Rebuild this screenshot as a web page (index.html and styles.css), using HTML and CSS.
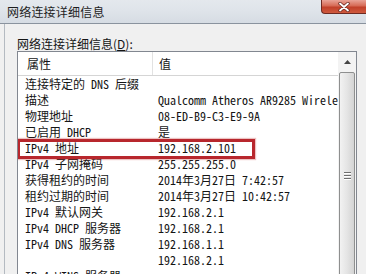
FILE: index.html
```html
<!DOCTYPE html>
<html lang="zh-CN">
<head>
<meta charset="utf-8">
<link rel="stylesheet" href="styles.css">
</head>
<body>
<div class="window">
  <div class="titlebar">
    <span class="title">网络连接详细信息</span>
    <div class="close">
      <svg width="14" height="10" viewBox="0 0 14 10"><path d="M3 1.5 L11 8.5 M11 1.5 L3 8.5" stroke="#6b2a22" stroke-width="3.4" stroke-linecap="round"/><path d="M3 1.5 L11 8.5 M11 1.5 L3 8.5" stroke="#fff" stroke-width="1.8" stroke-linecap="round"/></svg>
    </div>
  </div>
  <div class="body">
    <div class="label">网络连接详细信息(<u>D</u>):</div>
    <div class="list">
      <div class="table">
        <div class="header">
          <div class="hcell c1">属性</div>
          <div class="hcell c2">值</div>
        </div>
        <div class="rows">
          <div class="row"><span class="c1">连接特定的 DNS 后缀</span><span class="c2"></span></div>
          <div class="row"><span class="c1">描述</span><span class="c2">Qualcomm Atheros AR9285 Wireless Network Adapter</span></div>
          <div class="row"><span class="c1">物理地址</span><span class="c2">08-ED-B9-C3-E9-9A</span></div>
          <div class="row"><span class="c1">已启用 DHCP</span><span class="c2">是</span></div>
          <div class="row"><span class="c1">IPv4 地址</span><span class="c2">192.168.2.101</span></div>
          <div class="row"><span class="c1">IPv4 子网掩码</span><span class="c2">255.255.255.0</span></div>
          <div class="row"><span class="c1">获得租约的时间</span><span class="c2">2014年3月27日 7:42:57</span></div>
          <div class="row"><span class="c1">租约过期的时间</span><span class="c2">2014年3月27日 10:42:57</span></div>
          <div class="row"><span class="c1">IPv4 默认网关</span><span class="c2">192.168.2.1</span></div>
          <div class="row"><span class="c1">IPv4 DHCP 服务器</span><span class="c2">192.168.2.1</span></div>
          <div class="row"><span class="c1">IPv4 DNS 服务器</span><span class="c2">192.168.1.1</span></div>
          <div class="row"><span class="c1"></span><span class="c2">192.168.2.1</span></div>
          <div class="row"><span class="c1">IPv4 WINS 服务器</span><span class="c2"></span></div>
          <div class="mark"></div>
        </div>
      </div>
      <div class="scrollbar">
        <div class="sb-btn">
          <svg width="7" height="4" viewBox="0 0 7 4"><path d="M0 4 L3.5 0 L7 4 Z" fill="#444"/></svg>
        </div>
        <div class="thumb">
          <div class="grip"><i></i><i></i><i></i></div>
        </div>
      </div>
    </div>
  </div>
</div>
</body>
</html>
```
FILE: styles.css
```css
* { box-sizing: border-box; }
html, body { margin: 0; padding: 0; }
body {
  width: 366px;
  height: 274px;
  overflow: hidden;
  background: #f0f0f0;
  font-family: "Noto Sans Mono CJK SC", "Noto Sans CJK SC", monospace;
  color: #151515;
}
.window {
  display: flex;
  flex-direction: column;
  width: 366px;
  height: 274px;
}
.titlebar {
  height: 24px;
  flex: none;
  display: flex;
  justify-content: space-between;
  align-items: flex-start;
  background: linear-gradient(180deg, #e4e8ed 0%, #dfe4ea 45%, #d6dce3 100%);
  border-bottom: 1px solid #8a939e;
}
.title {
  font-family: "Noto Sans CJK SC", sans-serif;
  font-size: 12px;
  line-height: 23px;
  padding-left: 7px;
  color: #1e1e1e;
  letter-spacing: 0.2px;
}
.close {
  width: 45px;
  height: 14px;
  display: flex;
  align-items: center;
  justify-content: center;
  background: linear-gradient(180deg, #e9a397 0%, #d66a55 45%, #c1402a 55%, #cf5a3e 100%);
  border: 1px solid #6e2a22;
  border-top: none;
  border-right: none;
  border-bottom-left-radius: 4px;
}
.body {
  flex: 1;
  display: flex;
  flex-direction: column;
  margin-left: 4px;
  border-left: 1px solid #b4bac1;
  padding: 12px 9px 0 12px;
  min-height: 0;
}
.label {
  font-family: "Noto Sans CJK SC", sans-serif;
  font-size: 12px;
  line-height: 15px;
  height: 15px;
  flex: none;
}
.label u { text-decoration-thickness: 1px; }
.list {
  flex: none;
  height: 250px;
  display: flex;
  background: #fff;
  border: 1px solid #828790;
}
.table {
  flex: 1;
  min-width: 0;
  overflow: hidden;
  display: flex;
  flex-direction: column;
}
.header {
  height: 24px;
  flex: none;
  display: flex;
  border-bottom: 1px solid #d5d5d5;
  background: #fff;
}
.hcell {
  font-family: "Noto Sans CJK SC", sans-serif;
  font-size: 12px;
  line-height: 23px;
}
.hcell.c1 {
  width: 135px;
  padding-left: 9px;
  border-right: 1px solid #e2e2e2;
}
.hcell.c2 { padding-left: 6px; }
.rows {
  position: relative;
  display: flex;
  flex-direction: column;
}
.row {
  height: 16px;
  display: flex;
  font-size: 12px;
  line-height: 16px;
  white-space: nowrap;
}
.row .c1 {
  width: 135px;
  flex: none;
  padding-left: 7px;
}
.row .c2 {
  padding-left: 5px;
}
.mark {
  position: absolute;
  left: -1px;
  top: 63px;
  width: 238px;
  height: 20px;
  border: 3px solid #b8272d;
  box-shadow: 0 0 1px 1px rgba(200, 80, 80, 0.35);
}
.scrollbar {
  width: 18px;
  flex: none;
  display: flex;
  flex-direction: column;
  background: #f3f3f3;
  padding: 0 1px;
}
.sb-btn {
  height: 20px;
  flex: none;
  display: flex;
  align-items: center;
  justify-content: center;
}
.thumb {
  height: 206px;
  flex: none;
  border: 1px solid #8e8f8f;
  border-radius: 2px;
  background: linear-gradient(90deg, #f2f2f2 0%, #e6e6e6 45%, #d4d4d4 100%);
  display: flex;
  align-items: center;
  justify-content: center;
}
.grip {
  display: flex;
  flex-direction: column;
  gap: 2px;
}
.grip i {
  display: block;
  width: 7px;
  height: 1px;
  background: #6f6f6f;
  box-shadow: 0 1px 0 #fff;
}
```
